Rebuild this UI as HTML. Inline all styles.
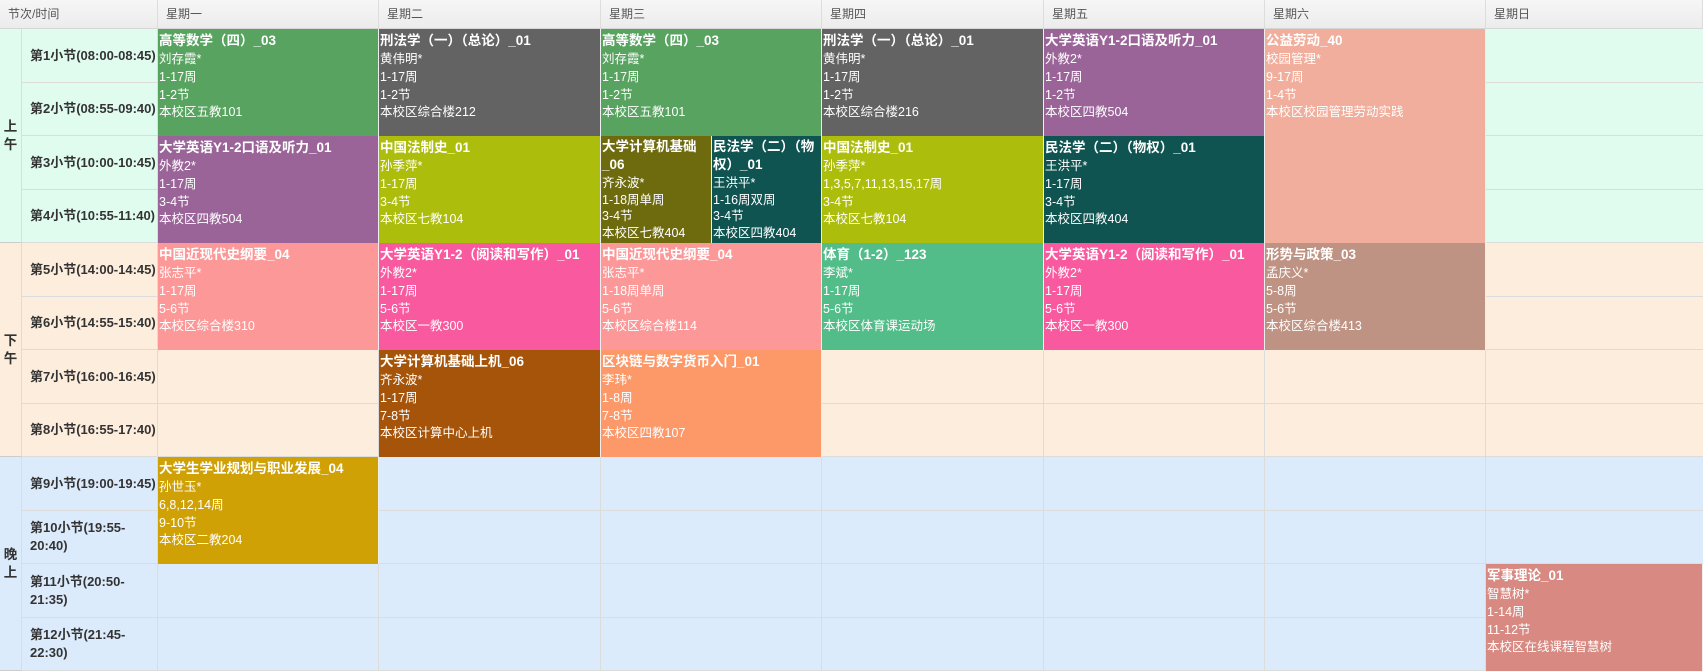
<!DOCTYPE html>
<html><head><meta charset="utf-8"><style>
*{margin:0;padding:0;box-sizing:border-box}
body{width:1703px;height:671px;position:relative;overflow:hidden;background:#fff;font-family:"Liberation Sans","Noto Sans CJK SC",sans-serif;}
.h{position:absolute;top:0;height:29px;background:linear-gradient(#f6f6f6,#ececec);border-right:1px solid #ddd;border-bottom:1px solid #d6d6d6;font-size:12px;color:#555;line-height:28px;padding-left:8px}
.bg{position:absolute;left:0;width:1703px}
.row{position:absolute;left:22px;width:1681px;height:53.5px;border-bottom:1px solid #dcdcdc}
.vl{position:absolute;top:29px;bottom:0;width:1px;background:#dcdcdc}
.t{position:absolute;left:22px;width:136px;height:53.5px;font-size:13px;font-weight:bold;color:#333;padding-left:8px;display:flex;align-items:center;line-height:18px}
.s{position:absolute;left:0;width:22px;font-size:13.5px;font-weight:bold;color:#333;display:flex;align-items:center;justify-content:center;text-align:center;line-height:18px;border-right:1px solid #dcdcdc;border-bottom:1px solid #ccc}
.c{position:absolute;color:#fff;font-size:12.5px;line-height:17.8px;padding:3px 1px;overflow:hidden;border-right:1px solid #eee}
.c b{font-size:13.5px;display:block;line-height:18px;margin-bottom:1px}
</style></head><body>
<div class="bg" style="top:29px;height:214px;background:#e0fcef"></div>
<div class="bg" style="top:243px;height:214px;background:#fdeddd"></div>
<div class="bg" style="top:457px;height:214px;background:#dcebfc"></div>
<div class="h" style="left:0;width:158px">节次/时间</div>
<div class="h" style="left:158px;width:221px">星期一</div>
<div class="h" style="left:379px;width:222px">星期二</div>
<div class="h" style="left:601px;width:221px">星期三</div>
<div class="h" style="left:822px;width:222px">星期四</div>
<div class="h" style="left:1044px;width:221px">星期五</div>
<div class="h" style="left:1265px;width:221px">星期六</div>
<div class="h" style="left:1486px;width:217px">星期日</div>
<div class="row" style="top:29px"></div><div class="row" style="top:82.5px"></div><div class="row" style="top:136px"></div><div class="row" style="top:189.5px"></div>
<div class="row" style="top:243px"></div><div class="row" style="top:296.5px"></div><div class="row" style="top:350px"></div><div class="row" style="top:403.5px"></div>
<div class="row" style="top:457px"></div><div class="row" style="top:510.5px"></div><div class="row" style="top:564px"></div><div class="row" style="top:617.5px"></div>
<div class="vl" style="left:157px"></div><div class="vl" style="left:378px"></div><div class="vl" style="left:600px"></div><div class="vl" style="left:821px"></div><div class="vl" style="left:1043px"></div><div class="vl" style="left:1264px"></div><div class="vl" style="left:1485px"></div>
<div class="s" style="top:29px;height:214px">上<br>午</div>
<div class="s" style="top:243px;height:214px">下<br>午</div>
<div class="s" style="top:457px;height:214px">晚<br>上</div>
<div class="t" style="top:29px">第1小节(08:00-08:45)</div>
<div class="t" style="top:82.5px">第2小节(08:55-09:40)</div>
<div class="t" style="top:136px">第3小节(10:00-10:45)</div>
<div class="t" style="top:189.5px">第4小节(10:55-11:40)</div>
<div class="t" style="top:243px">第5小节(14:00-14:45)</div>
<div class="t" style="top:296.5px">第6小节(14:55-15:40)</div>
<div class="t" style="top:350px">第7小节(16:00-16:45)</div>
<div class="t" style="top:403.5px">第8小节(16:55-17:40)</div>
<div class="t" style="top:457px">第9小节(19:00-19:45)</div>
<div class="t" style="top:510.5px">第10小节(19:55-<br>20:40)</div>
<div class="t" style="top:564px">第11小节(20:50-<br>21:35)</div>
<div class="t" style="top:617.5px">第12小节(21:45-<br>22:30)</div>

<div class="c" style="left:158px;top:29px;width:221px;height:107px;background:#57a35f"><b>高等数学（四）_03</b>刘存霞*<br>1-17周<br>1-2节<br>本校区五教101</div>
<div class="c" style="left:379px;top:29px;width:222px;height:107px;background:#636363"><b>刑法学（一）（总论）_01</b>黄伟明*<br>1-17周<br>1-2节<br>本校区综合楼212</div>
<div class="c" style="left:601px;top:29px;width:221px;height:107px;background:#57a35f"><b>高等数学（四）_03</b>刘存霞*<br>1-17周<br>1-2节<br>本校区五教101</div>
<div class="c" style="left:822px;top:29px;width:222px;height:107px;background:#636363"><b>刑法学（一）（总论）_01</b>黄伟明*<br>1-17周<br>1-2节<br>本校区综合楼216</div>
<div class="c" style="left:1044px;top:29px;width:221px;height:107px;background:#9a6499"><b>大学英语Y1-2口语及听力_01</b>外教2*<br>1-17周<br>1-2节<br>本校区四教504</div>
<div class="c" style="left:1265px;top:29px;width:221px;height:214px;background:#f2ae9c"><b>公益劳动_40</b>校园管理*<br>9-17周<br>1-4节<br>本校区校园管理劳动实践</div>

<div class="c" style="left:158px;top:136px;width:221px;height:107px;background:#9a6499"><b>大学英语Y1-2口语及听力_01</b>外教2*<br>1-17周<br>3-4节<br>本校区四教504</div>
<div class="c" style="left:379px;top:136px;width:222px;height:107px;background:#adbd0c"><b>中国法制史_01</b>孙季萍*<br>1-17周<br>3-4节<br>本校区七教104</div>
<div class="c" style="left:601px;top:136px;width:111px;height:107px;background:#6e6a0e;line-height:16.6px;padding-top:2px"><b>大学计算机基础<br>_06</b>齐永波*<br>1-18周单周<br>3-4节<br>本校区七教404</div>
<div class="c" style="left:712px;top:136px;width:110px;height:107px;background:#0f5451;line-height:16.6px;padding-top:2px"><b>民法学（二）（物<br>权）_01</b>王洪平*<br>1-16周双周<br>3-4节<br>本校区四教404</div>
<div class="c" style="left:822px;top:136px;width:222px;height:107px;background:#adbd0c"><b>中国法制史_01</b>孙季萍*<br>1,3,5,7,11,13,15,17周<br>3-4节<br>本校区七教104</div>
<div class="c" style="left:1044px;top:136px;width:221px;height:107px;background:#0f5451"><b>民法学（二）（物权）_01</b>王洪平*<br>1-17周<br>3-4节<br>本校区四教404</div>

<div class="c" style="left:158px;top:243px;width:221px;height:107px;background:#fd9898"><b>中国近现代史纲要_04</b>张志平*<br>1-17周<br>5-6节<br>本校区综合楼310</div>
<div class="c" style="left:379px;top:243px;width:222px;height:107px;background:#f9599e"><b>大学英语Y1-2（阅读和写作）_01</b>外教2*<br>1-17周<br>5-6节<br>本校区一教300</div>
<div class="c" style="left:601px;top:243px;width:221px;height:107px;background:#fd9898"><b>中国近现代史纲要_04</b>张志平*<br>1-18周单周<br>5-6节<br>本校区综合楼114</div>
<div class="c" style="left:822px;top:243px;width:222px;height:107px;background:#52bd89"><b>体育（1-2）_123</b>李斌*<br>1-17周<br>5-6节<br>本校区体育课运动场</div>
<div class="c" style="left:1044px;top:243px;width:221px;height:107px;background:#f9599e"><b>大学英语Y1-2（阅读和写作）_01</b>外教2*<br>1-17周<br>5-6节<br>本校区一教300</div>
<div class="c" style="left:1265px;top:243px;width:221px;height:107px;background:#bf9383"><b>形势与政策_03</b>孟庆义*<br>5-8周<br>5-6节<br>本校区综合楼413</div>

<div class="c" style="left:379px;top:350px;width:222px;height:107px;background:#a5540a"><b>大学计算机基础上机_06</b>齐永波*<br>1-17周<br>7-8节<br>本校区计算中心上机</div>
<div class="c" style="left:601px;top:350px;width:221px;height:107px;background:#fd9869"><b>区块链与数字货币入门_01</b>李玮*<br>1-8周<br>7-8节<br>本校区四教107</div>

<div class="c" style="left:158px;top:457px;width:221px;height:107px;background:#d0a105"><b>大学生学业规划与职业发展_04</b>孙世玉*<br>6,8,12,14周<br>9-10节<br>本校区二教204</div>
<div class="c" style="left:1486px;top:564px;width:217px;height:107px;background:#d88a82"><b>军事理论_01</b>智慧树*<br>1-14周<br>11-12节<br>本校区在线课程智慧树</div>
</body></html>
